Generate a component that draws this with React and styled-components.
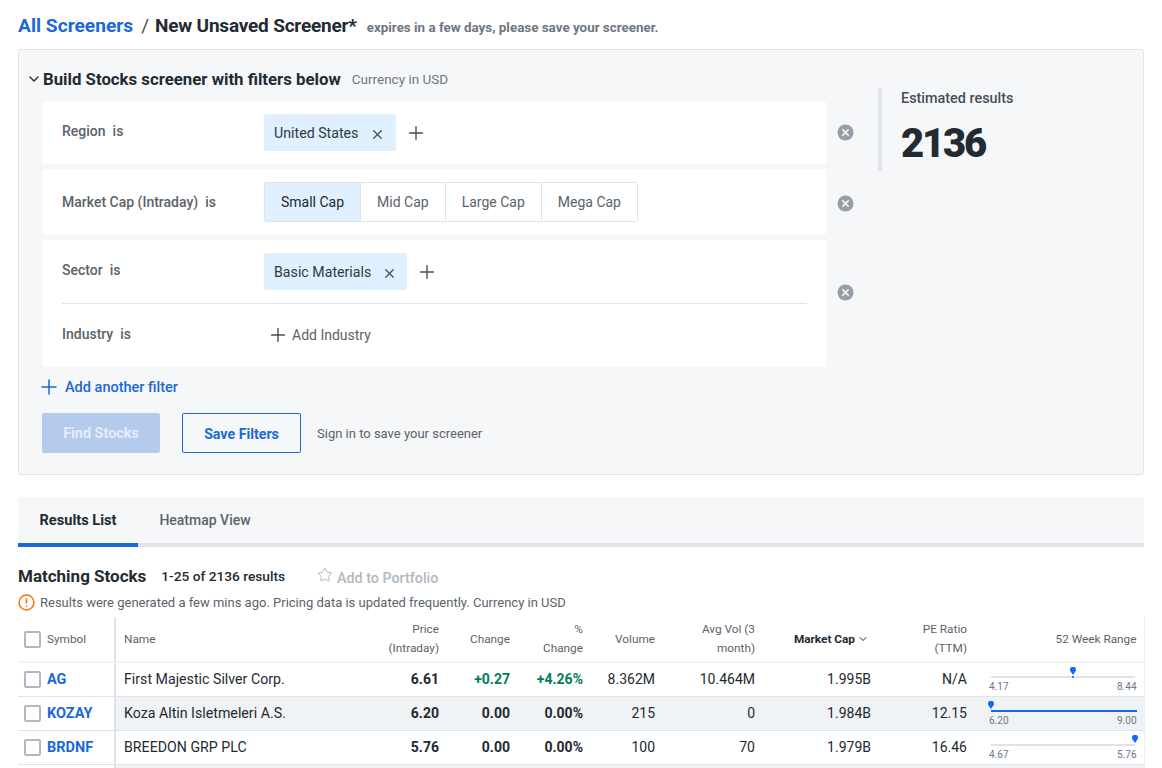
import React from "react";
import styled, { createGlobalStyle } from "styled-components";
import { X, Plus, ChevronDown, Star } from "lucide-react";

const GlobalStyle = createGlobalStyle`
  html, body {
    margin: 0;
    height: 768px;
    overflow: hidden;
    background: #fff;
  }
  body {
    font-family: Roboto, "Liberation Sans", sans-serif;
    color: #232a31;
  }
`;

const Page = styled.div`
  width: 1126px;
  padding: 14px 18px 0;
`;

const TitleRow = styled.div`
  display: flex;
  align-items: baseline;
  height: 23px;
  margin-bottom: 12px;
  font-size: 19px;
  font-weight: 700;
`;

const TitleLink = styled.span`
  font-size: 19.2px;
  color: #1a68d9;
`;

const TitleText = styled.span`
  letter-spacing: -0.2px;
`;

const Slash = styled.span`
  margin: 0 6px 0 8px;
  font-weight: 400;
  color: #464e56;
`;

const Expires = styled.span`
  margin-left: 10px;
  font-size: 13.4px;
  font-weight: 700;
  color: #6e7780;
`;

const FilterPanel = styled.section`
  display: flex;
  height: 424px;
  border: 1px solid #e0e4e9;
  border-radius: 2px;
  background: #f5f7f9;
`;

const BuilderColumn = styled.div`
  width: 859px;
  padding: 19px 0 0 7px;
  box-sizing: border-box;
`;

const BuilderHeader = styled.div`
  display: flex;
  align-items: center;
  height: 19px;
  margin-bottom: 13px;
  font-size: 16.8px;
  font-weight: 700;
  svg {
    width: 16px;
    height: 16px;
    margin-right: 1px;
    stroke-width: 2;
  }
`;

const Currency = styled.span`
  margin: 1px 0 0 11px;
  font-size: 13.5px;
  font-weight: 400;
  color: #6e7780;
`;

const FilterLine = styled.div`
  display: flex;
  align-items: center;
  margin-bottom: 5px;
`;

const FilterCard = styled.div`
  width: 784px;
  margin-left: 16px;
  padding: 0 19px 0 20px;
  box-sizing: border-box;
  background: #fff;
  border-radius: 3px;
`;

const FilterRow = styled.div`
  display: flex;
  align-items: center;
  height: ${(p) => p.$height}px;
  border-bottom: ${(p) => (p.$divider ? "1px solid #e0e4e9" : "none")};
`;

const FilterLabel = styled.div`
  width: 202px;
  flex-shrink: 0;
  margin-top: ${(p) => p.$offset ?? -3}px;
  font-size: 14px;
  font-weight: 500;
  color: #5b636a;
`;

const IsWord = styled.span`
  margin-left: 7px;
`;

const Chip = styled.div`
  display: flex;
  align-items: center;
  height: 37px;
  padding: 0 ${(p) => (p.$tight ? 10 : 11)}px 0 10px;
  background: #e0f0ff;
  border-radius: 2px;
  font-size: 14.2px;
  color: #33393f;
  svg {
    width: 15px;
    height: 15px;
    margin: 3px 0 0 ${(p) => (p.$tight ? 11 : 12)}px;
    color: #464e56;
  }
`;

const PlusButton = styled.span`
  display: flex;
  margin-left: 9px;
  color: #464e56;
  svg {
    width: 22px;
    height: 22px;
    stroke-width: 1.5;
  }
`;

const SegmentGroup = styled.div`
  display: flex;
  height: 38px;
  border: 1px solid #e0e4e9;
  border-radius: 2px;
`;

const Segment = styled.div`
  display: flex;
  align-items: center;
  padding: 0 16px;
  font-size: 14px;
  color: ${(p) => (p.$active ? "#232a31" : "#5b636a")};
  background: ${(p) => (p.$active ? "#e0f0ff" : "#fff")};
  & + & {
    border-left: 1px solid #e0e4e9;
  }
`;

const AddIndustry = styled.div`
  display: flex;
  align-items: center;
  margin: -2px 0 0 3px;
  font-size: 14px;
  color: #5b636a;
  svg {
    width: 22px;
    height: 22px;
    margin-right: 3px;
    stroke-width: 1.5;
    color: #464e56;
  }
`;

const RemoveIcon = styled.svg`
  width: 17px;
  height: 17px;
  margin: ${(p) => p.$shift ?? 0}px 0 ${(p) => p.$lift ?? 0}px 11px;
`;

const AddFilter = styled.div`
  display: flex;
  align-items: center;
  height: 20px;
  margin: 10px 0 16px 16px;
  font-size: 14.5px;
  font-weight: 500;
  color: #1a68d9;
  svg {
    width: 24px;
    height: 24px;
    margin: 0 4px 0 -5px;
    stroke-width: 1.5;
  }
`;

const ButtonRow = styled.div`
  display: flex;
  align-items: center;
  margin-left: 16px;
  font-size: 13px;
  color: #5b636a;
`;

const FindButton = styled.div`
  display: flex;
  align-items: center;
  justify-content: center;
  width: 118px;
  height: 39px;
  padding-top: 1px;
  background: #b5cbee;
  border-radius: 2px;
  color: #e4edf9;
  font-size: 14.4px;
  font-weight: 700;
`;

const SaveButton = styled.div`
  display: flex;
  align-items: center;
  justify-content: center;
  width: 117px;
  height: 37px;
  padding-top: 1px;
  margin: 0 16px 0 22px;
  border: 1px solid #1a68d9;
  border-radius: 2px;
  color: #1a68d9;
  font-size: 14.2px;
  font-weight: 700;
`;

const Estimate = styled.aside`
  width: 227px;
  height: 83px;
  margin-top: 38px;
  padding: 0 0 0 19px;
  border-left: 4px solid #e0e4e9;
`;

const EstimateLabel = styled.div`
  margin-top: 2px;
  font-size: 14.4px;
  font-weight: 500;
  color: #464e56;
`;

const EstimateValue = styled.div`
  margin-top: 15px;
  font-size: 40px;
  line-height: 44px;
  font-weight: 900;
  letter-spacing: -2.2px;
`;

const Tabs = styled.div`
  display: flex;
  height: 46px;
  margin-top: 22px;
  background: #f5f7f9;
  border-bottom: 4px solid #e0e4e9;
`;

const Tab = styled.div`
  display: flex;
  align-items: center;
  justify-content: center;
  width: ${(p) => p.$width}px;
  height: 46px;
  font-size: ${(p) => (p.$active ? 14.6 : 14)}px;
  font-weight: ${(p) => (p.$active ? 700 : 500)};
  color: ${(p) => (p.$active ? "#232a31" : "#5b636a")};
  border-bottom: ${(p) => (p.$active ? "4px solid #1a68d9" : "none")};
`;

const SummaryRow = styled.div`
  display: flex;
  align-items: center;
  height: 20px;
  margin-top: 19px;
`;

const SummaryTitle = styled.div`
  font-size: 17px;
  font-weight: 700;
`;

const SummaryCount = styled.div`
  margin-left: 15px;
  font-size: 13.7px;
  font-weight: 500;
`;

const AddPortfolio = styled.div`
  display: flex;
  align-items: center;
  margin: 3px 0 0 32px;
  font-size: 14.3px;
  font-weight: 500;
  color: #b0b9c1;
  svg {
    width: 16px;
    height: 16px;
    margin: -6px 4px 0 0;
    stroke-width: 1.5;
  }
`;

const Notice = styled.div`
  display: flex;
  align-items: center;
  height: 18px;
  margin-top: 7px;
  font-size: 13px;
  color: #5b636a;
  svg {
    width: 17px;
    height: 17px;
    margin-right: 5px;
  }
`;

const Table = styled.table`
  width: 1126px;
  margin-top: 6px;
  border-collapse: collapse;
  table-layout: fixed;
  border-right: 1px solid #eef0f2;
`;

const HeadCell = styled.th`
  height: 45px;
  padding: 0 ${(p) => p.$right ?? 10}px 0 ${(p) => (p.$left ? 8 : 0)}px;
  box-sizing: border-box;
  text-align: ${(p) => (p.$left ? "left" : "right")};
  font-size: 11.8px;
  line-height: 19px;
  font-weight: ${(p) => (p.$sorted ? 700 : 400)};
  color: ${(p) => (p.$sorted ? "#232a31" : "#5b636a")};
  border-bottom: 2px solid #f0f3f5;
  svg {
    width: 12px;
    height: 12px;
    margin-left: 2px;
    vertical-align: -2px;
  }
`;

const StickyHead = styled(HeadCell)`
  padding: 0 0 0 6px;
  border-right: 2px solid #e0e4e9;
`;

const SymbolHead = styled.div`
  display: flex;
  align-items: center;
`;

const Checkbox = styled.span`
  display: block;
  width: 13px;
  height: 13px;
  margin-right: 6px;
  border: 2px solid #b0b9c1;
  border-radius: 2px;
  background: #fff;
`;

const Row = styled.tr`
  background: ${(p) => (p.$shaded ? "#f0f3f5" : "#fff")};
`;

const Cell = styled.td`
  height: 34px;
  padding: 0 ${(p) => p.$right ?? 10}px 0 ${(p) => (p.$left ? 8 : 0)}px;
  box-sizing: border-box;
  text-align: ${(p) => (p.$left ? "left" : "right")};
  font-size: ${(p) => (p.$left ? 14.2 : 14)}px;
  font-weight: ${(p) => (p.$bold ? 700 : 400)};
  color: ${(p) => (p.$green ? "#008055" : "#232a31")};
  border-bottom: 1px solid #e0e4e9;
`;

const SymbolCell = styled.td`
  padding: 0 0 0 6px;
  background: #fff;
  border-right: 2px solid #e0e4e9;
  border-bottom: 1px solid #e0e4e9;
`;

const SymbolWrap = styled.div`
  display: flex;
  align-items: center;
  font-size: 14.5px;
  font-weight: 700;
  color: #1a68d9;
`;

const RangeCell = styled.td`
  padding: 8px 7px 0 12px;
  box-sizing: border-box;
  border-bottom: 1px solid #e0e4e9;
`;

const RangeTrack = styled.div`
  position: relative;
  height: 2px;
  margin: 3px ${(p) => (p.$full ? 0 : 2)}px 0 2px;
  background: #e0e4e9;
`;

const RangeFill = styled.div`
  height: 2px;
  background: #1a68e0;
`;

const RangePin = styled.svg`
  position: absolute;
  top: -9px;
  width: 6px;
  height: 11px;
  margin-left: -3px;
`;

const RangeLabels = styled.div`
  display: flex;
  justify-content: space-between;
  margin-top: 3px;
  font-size: 10px;
  line-height: 12px;
  color: #6e7780;
`;

const stocks = [
  { symbol: "AG", name: "First Majestic Silver Corp.", price: "6.61", change: "+0.27", pct: "+4.26%", volume: "8.362M", avg: "10.464M", cap: "1.995B", pe: "N/A", low: "4.17", high: "8.44", pos: 57, up: true },
  { symbol: "KOZAY", name: "Koza Altin Isletmeleri A.S.", price: "6.20", change: "0.00", pct: "0.00%", volume: "215", avg: "0", cap: "1.984B", pe: "12.15", low: "6.20", high: "9.00", pos: 0, full: true },
  { symbol: "BRDNF", name: "BREEDON GRP PLC", price: "5.76", change: "0.00", pct: "0.00%", volume: "100", avg: "70", cap: "1.979B", pe: "16.46", low: "4.67", high: "5.76", pos: 100 },
];

const RemoveButton = ({ shift, lift }) => (
  <RemoveIcon viewBox="0 0 17 17" $shift={shift} $lift={lift}>
    <circle cx="8.5" cy="8.5" r="8" fill="#979ea8" />
    <path d="M5.8 5.8l5.4 5.4M11.2 5.8l-5.4 5.4" stroke="#fff" strokeWidth="1.6" strokeLinecap="round" />
  </RemoveIcon>
);

const StockRow = ({ stock, shaded }) => (
  <Row $shaded={shaded}>
    <SymbolCell>
      <SymbolWrap>
        <Checkbox />
        {stock.symbol}
      </SymbolWrap>
    </SymbolCell>
    <Cell $left>{stock.name}</Cell>
    <Cell $bold>{stock.price}</Cell>
    <Cell $bold $green={stock.up}>{stock.change}</Cell>
    <Cell $bold $green={stock.up}>{stock.pct}</Cell>
    <Cell>{stock.volume}</Cell>
    <Cell>{stock.avg}</Cell>
    <Cell>{stock.cap}</Cell>
    <Cell>{stock.pe}</Cell>
    <RangeCell>
      <RangeTrack $full={stock.full}>
        {stock.full && <RangeFill />}
        <RangePin viewBox="0 0 6 11" style={{ left: `${stock.pos}%` }}>
          <path d="M3 8L.6 4.4A3 3 0 1 1 5.4 4.4z" fill="#0f69ff" />
          {stock.pos > 0 && stock.pos < 100 && <rect x="2.2" y="9" width="1.6" height="2" fill="#0f69ff" />}
        </RangePin>
      </RangeTrack>
      <RangeLabels>
        <span>{stock.low}</span>
        <span>{stock.high}</span>
      </RangeLabels>
    </RangeCell>
  </Row>
);

const App = () => (
  <Page>
    <GlobalStyle />
    <TitleRow>
      <TitleLink>All Screeners</TitleLink>
      <Slash>/</Slash>
      <TitleText>New Unsaved Screener*</TitleText>
      <Expires>expires in a few days, please save your screener.</Expires>
    </TitleRow>

    <FilterPanel>
      <BuilderColumn>
        <BuilderHeader>
          <ChevronDown />
          Build Stocks screener with filters below
          <Currency>Currency in USD</Currency>
        </BuilderHeader>

        <FilterLine>
          <FilterCard>
            <FilterRow $height={63}>
              <FilterLabel>Region<IsWord>is</IsWord></FilterLabel>
              <Chip>United States<X /></Chip>
              <PlusButton><Plus /></PlusButton>
            </FilterRow>
          </FilterCard>
          <RemoveButton />
        </FilterLine>

        <FilterLine>
          <FilterCard>
            <FilterRow $height={66}>
              <FilterLabel $offset={-1}>Market Cap (Intraday)<IsWord>is</IsWord></FilterLabel>
              <SegmentGroup>
                <Segment $active>Small Cap</Segment>
                <Segment>Mid Cap</Segment>
                <Segment>Large Cap</Segment>
                <Segment>Mega Cap</Segment>
              </SegmentGroup>
            </FilterRow>
          </FilterCard>
          <RemoveButton shift={2} />
        </FilterLine>

        <FilterLine>
          <FilterCard>
            <FilterRow $height={63} $divider>
              <FilterLabel>Sector<IsWord>is</IsWord></FilterLabel>
              <Chip $tight>Basic Materials<X /></Chip>
              <PlusButton><Plus /></PlusButton>
            </FilterRow>
            <FilterRow $height={63}>
              <FilterLabel $offset={-4}>Industry<IsWord>is</IsWord></FilterLabel>
              <AddIndustry><Plus />Add Industry</AddIndustry>
            </FilterRow>
          </FilterCard>
          <RemoveButton lift={22} />
        </FilterLine>

        <AddFilter><Plus />Add another filter</AddFilter>

        <ButtonRow>
          <FindButton>Find Stocks</FindButton>
          <SaveButton>Save Filters</SaveButton>
          Sign in to save your screener
        </ButtonRow>
      </BuilderColumn>

      <Estimate>
        <EstimateLabel>Estimated results</EstimateLabel>
        <EstimateValue>2136</EstimateValue>
      </Estimate>
    </FilterPanel>

    <Tabs>
      <Tab $active $width={120}>Results List</Tab>
      <Tab $width={134}>Heatmap View</Tab>
    </Tabs>

    <SummaryRow>
      <SummaryTitle>Matching Stocks</SummaryTitle>
      <SummaryCount>1-25 of 2136 results</SummaryCount>
      <AddPortfolio><Star />Add to Portfolio</AddPortfolio>
    </SummaryRow>

    <Notice>
      <svg viewBox="0 0 17 17">
        <circle cx="8.5" cy="8.5" r="7.4" fill="none" stroke="#f5750a" strokeWidth="1.5" />
        <path d="M8.5 4.4v5.2M8.5 11.4v1.4" stroke="#f5750a" strokeWidth="1.6" />
      </svg>
      Results were generated a few mins ago. Pricing data is updated frequently. Currency in USD
    </Notice>

    <Table>
      <colgroup>
        <col width="97" />
        <col width="255" />
        <col width="79" />
        <col width="71" />
        <col width="73" />
        <col width="72" />
        <col width="100" />
        <col width="116" />
        <col width="96" />
        <col width="167" />
      </colgroup>
      <thead>
        <tr>
          <StickyHead $left>
            <SymbolHead><Checkbox />Symbol</SymbolHead>
          </StickyHead>
          <HeadCell $left>Name</HeadCell>
          <HeadCell>Price<br />(Intraday)</HeadCell>
          <HeadCell>Change</HeadCell>
          <HeadCell>%<br />Change</HeadCell>
          <HeadCell>Volume</HeadCell>
          <HeadCell>Avg Vol (3<br />month)</HeadCell>
          <HeadCell $sorted $right={12}>Market Cap<ChevronDown /></HeadCell>
          <HeadCell>PE Ratio<br />(TTM)</HeadCell>
          <HeadCell $right={7}>52 Week Range</HeadCell>
        </tr>
      </thead>
      <tbody>
        {stocks.map((stock, i) => (
          <StockRow key={stock.symbol} stock={stock} shaded={i % 2 === 1} />
        ))}
        <Row $shaded>
          <SymbolCell />
          <Cell colSpan={9} />
        </Row>
      </tbody>
    </Table>
  </Page>
);

export default App;
